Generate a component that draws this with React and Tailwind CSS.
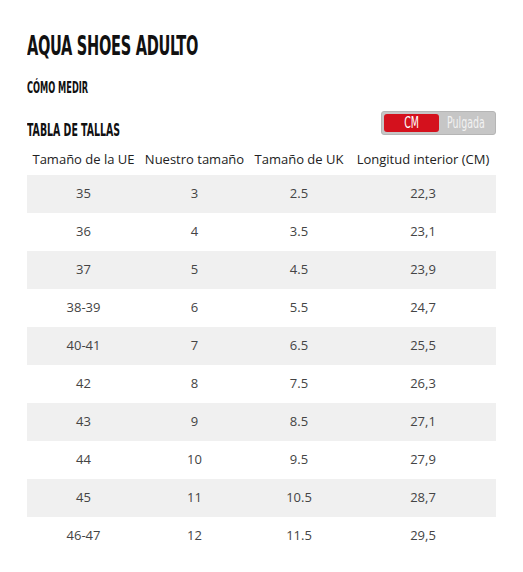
import React from "react";

const rows = [
  ["35", "3", "2.5", "22,3"],
  ["36", "4", "3.5", "23,1"],
  ["37", "5", "4.5", "23,9"],
  ["38-39", "6", "5.5", "24,7"],
  ["40-41", "7", "6.5", "25,5"],
  ["42", "8", "7.5", "26,3"],
  ["43", "9", "8.5", "27,1"],
  ["44", "10", "9.5", "27,9"],
  ["45", "11", "10.5", "28,7"],
  ["46-47", "12", "11.5", "29,5"],
];

const headers = ["Tamaño de la UE", "Nuestro tamaño", "Tamaño de UK", "Longitud interior (CM)"];

const cond = "font-['Liberation_Sans_Narrow','DejaVu_Sans_Condensed',sans-serif] font-bold";

export default function App() {
  return (
    <div className="w-[523px] h-[572px] bg-white px-[27px] pt-[30px] text-[#111]">
      {/* title */}
      <h1 className={`${cond} text-[27px] leading-[32px] tracking-[-0.5px] origin-left scale-x-[0.6] inline-block whitespace-nowrap`}>
        AQUA SHOES ADULTO
      </h1>

      <div className={`${cond} mt-[17px] text-[15px] leading-[18px] origin-left scale-x-[0.61] whitespace-nowrap`}>
        CÓMO MEDIR
      </div>

      {/* size chart header + toggle */}
      <div className="mt-[14px] flex items-start justify-between">
        <div className={`${cond} mt-[9px] text-[17px] leading-[20px] origin-left scale-x-[0.615] whitespace-nowrap`}>
          TABLA DE TALLAS
        </div>
        <div className="flex w-[115px] h-[24px] p-[2px] rounded-[3px] bg-[#c6c6c6] border border-[#b5b5b5] text-[15px] leading-[20px]">
          <div className="w-[56px] rounded-[3px] bg-[#d4111d] text-white flex items-center justify-center">
            <span className="font-['Liberation_Sans_Narrow','DejaVu_Sans_Condensed',sans-serif] origin-center scale-x-[0.7]">CM</span>
          </div>
          <div className="flex-1 flex items-center justify-center text-[#f2f2f2]">
            <span className="font-['Liberation_Sans_Narrow','DejaVu_Sans_Condensed',sans-serif] origin-center scale-x-[0.7]">Pulgada</span>
          </div>
        </div>
      </div>

      {/* table */}
      <div className="mt-[5px] font-['Open_Sans',sans-serif] text-[13px]">
        <div className="grid grid-cols-[113px_109px_100px_148px] h-[30px] items-center text-[#222]">
          {headers.map((h) => (
            <div key={h} className="text-center whitespace-nowrap">{h}</div>
          ))}
        </div>
        {rows.map((r, i) => (
          <div
            key={i}
            className={`grid grid-cols-[113px_109px_100px_148px] h-[38px] items-center text-[#444] ${
              i % 2 === 0 ? "bg-[#f0f0f0]" : "bg-white"
            }`}
          >
            {r.map((c, j) => (
              <div key={j} className="text-center">{c}</div>
            ))}
          </div>
        ))}
      </div>
    </div>
  );
}
